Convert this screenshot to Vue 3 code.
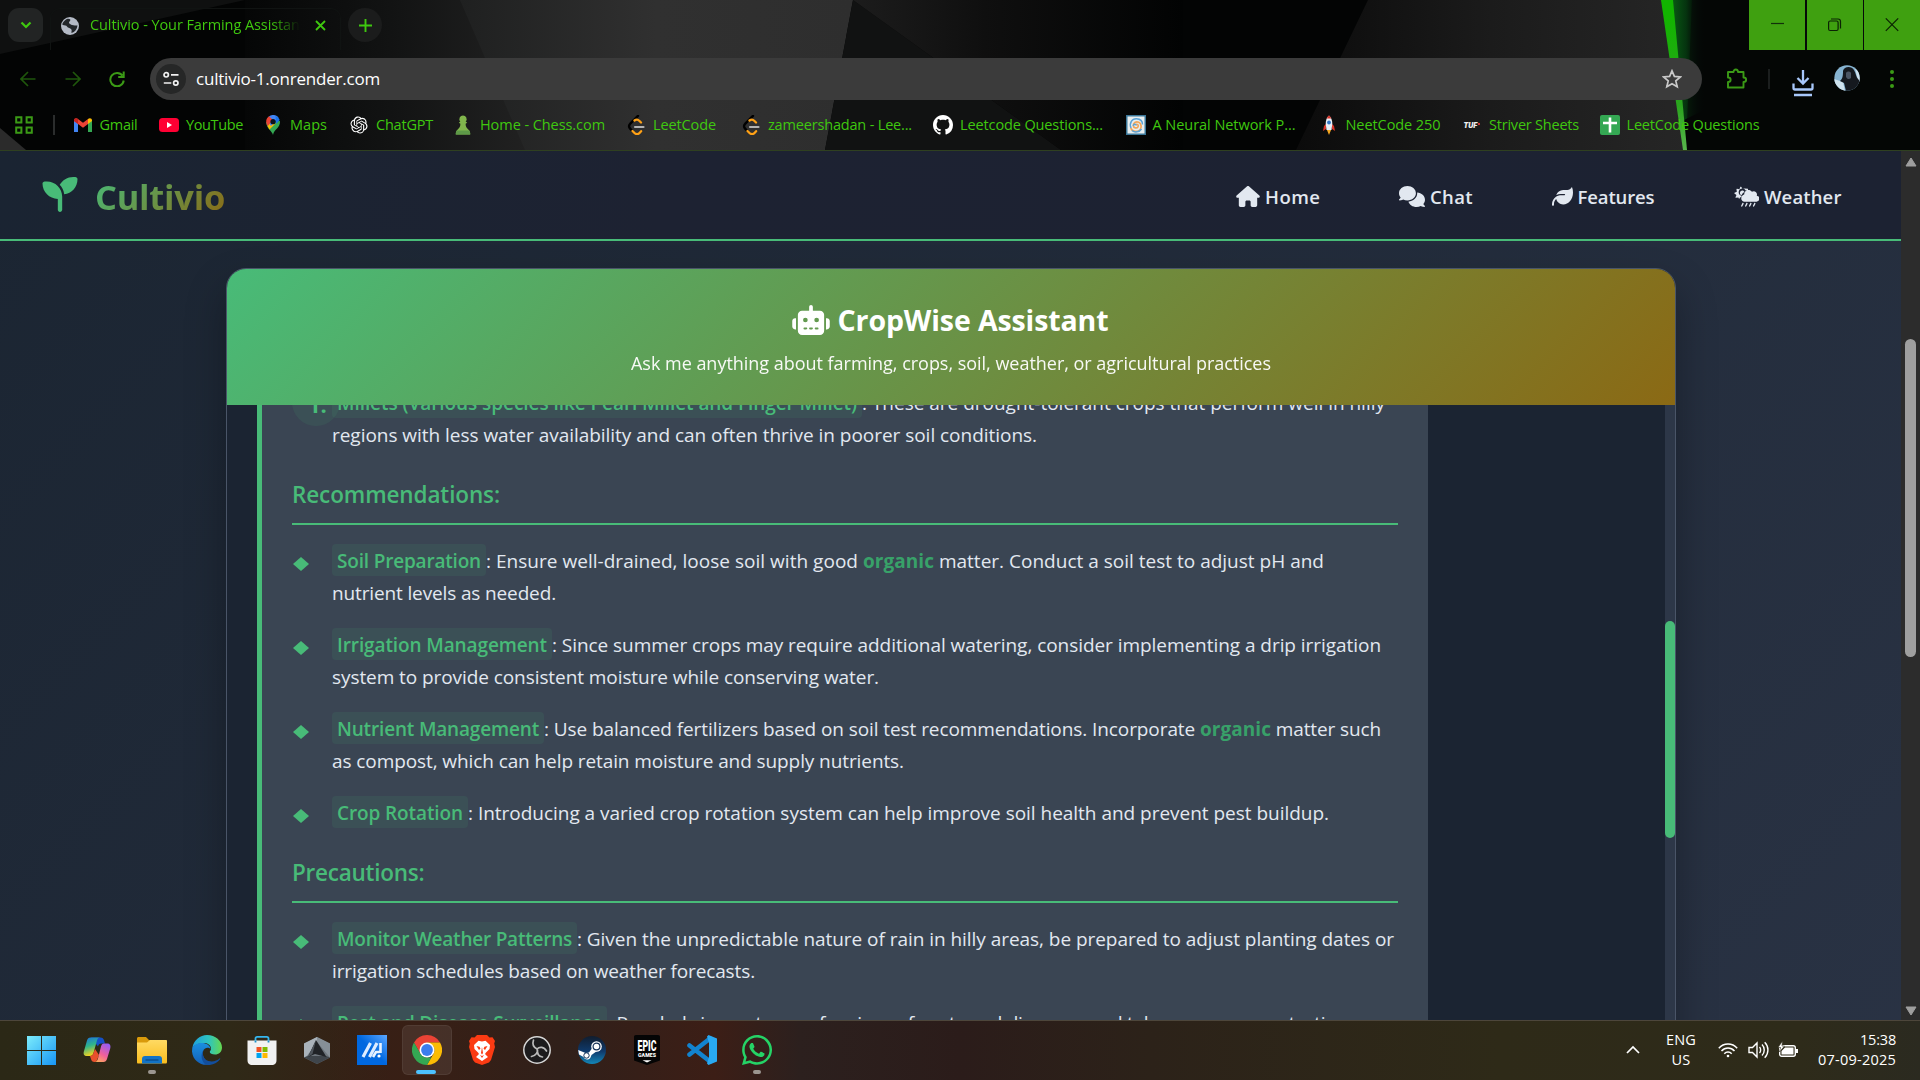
<script setup>
import { nextTick } from 'vue'

// Spreads a text run over its column width through letter spacing.
const vFit = {
  mounted(el, { value }) {
    nextTick(() => {
      el.style.width = 'auto'
      el.style.letterSpacing = '0px'
      const natural = el.getBoundingClientRect().width
      const count = el.textContent.length
      el.style.letterSpacing = `${(value - natural) / count}px`
      el.style.width = `${value}px`
    })
  }
}

const art = {
  gmail: '<path fill="#4285f4" d="M1 5v12h4V8z"/><path fill="#34a853" d="M15 8v9h4V5z"/><path fill="#ea4335" d="M1 5.500C1 3 3.500 2.600 5 4l5 3.800L15 4v5l-5 3.800L5 9v-.1L1 6z"/><path fill="#fbbc04" d="M15 4c1.500-1.400 4-1 4 1.500V6l-4 3z"/><path fill="#c5221f" d="M1 5.500C1 3 3.500 2.600 5 4v5L1 6z"/>',
  youtube: '<rect y="3" width="20" height="14" rx="3.500" fill="#ff0033"/><path fill="#fff" d="M8 7l5 3-5 3z"/>',
  maps: '<path fill="#34a853" d="M10 20c-.8-4-6.800-6.500-6.800-13L17 6c.5 7-6 8-7 14z"/><path fill="#fbbc04" d="M4.500 11l5-5.500 3 3-6 6z"/><path fill="#4285f4" d="M6 1.500C8-.6 13-.8 15.500 2.500L8 11 4 5z"/><path fill="#ea4335" d="M3.200 7C3 4 4.500 2.500 6 1.300L10 5 4.600 11C3.700 9.500 3.200 8 3.200 7z"/><path fill="#1a73e8" d="M12.500 1c2 .7 3.600 2.200 4.200 4L13 9z"/><circle cx="10" cy="6.700" r="2.600" fill="#0a1020"/>',
  gpt: '<g transform="translate(1.500 1.500) scale(.71)"><path fill="#fff" d="M22.2819 9.8211a5.9847 5.9847 0 0 0-.5157-4.9108 6.0462 6.0462 0 0 0-6.5098-2.9A6.0651 6.0651 0 0 0 4.9807 4.1818a5.9847 5.9847 0 0 0-3.9977 2.9 6.0462 6.0462 0 0 0 .7427 7.0966 5.98 5.98 0 0 0 .511 4.9107 6.051 6.051 0 0 0 6.5146 2.9001A5.9847 5.9847 0 0 0 13.2599 24a6.0557 6.0557 0 0 0 5.7718-4.2058 5.9894 5.9894 0 0 0 3.9977-2.9001 6.0557 6.0557 0 0 0-.7475-7.073zm-9.022 12.6081a4.4755 4.4755 0 0 1-2.8764-1.0408l.1419-.0804 4.7783-2.7582a.7948.7948 0 0 0 .3927-.6813v-6.7369l2.02 1.1686a.071.071 0 0 1 .038.052v5.5826a4.504 4.504 0 0 1-4.4945 4.4944zm-9.6607-4.1254a4.4708 4.4708 0 0 1-.5346-3.0137l.142.0852 4.783 2.7582a.7712.7712 0 0 0 .7806 0l5.8428-3.3685v2.3324a.0804.0804 0 0 1-.0332.0615L9.74 19.9502a4.4992 4.4992 0 0 1-6.1408-1.6464zM2.3408 7.8956a4.485 4.485 0 0 1 2.3655-1.9728V11.6a.7664.7664 0 0 0 .3879.6765l5.8144 3.3543-2.0201 1.1685a.0757.0757 0 0 1-.071 0l-4.8303-2.7865A4.504 4.504 0 0 1 2.3408 7.872zm16.5963 3.8558L13.1038 8.364 15.1192 7.2a.0757.0757 0 0 1 .071 0l4.8303 2.7913a4.4944 4.4944 0 0 1-.6765 8.1042v-5.6772a.79.79 0 0 0-.407-.667zm2.0107-3.0231l-.142-.0852-4.7735-2.7818a.7759.7759 0 0 0-.7854 0L9.409 9.2297V6.8974a.0662.0662 0 0 1 .0284-.0615l4.8303-2.7866a4.4992 4.4992 0 0 1 6.6802 4.66zM8.3065 12.863l-2.02-1.1638a.0804.0804 0 0 1-.038-.0567V6.0742a4.4992 4.4992 0 0 1 7.3757-3.4537l-.142.0805L8.704 5.459a.7948.7948 0 0 0-.3927.6813zm1.0976-2.3654l2.602-1.4998 2.6069 1.4998v2.9994l-2.5974 1.4997-2.6067-1.4997Z"/></g>',
  chess: '<path fill="#81b64c" d="M10 .5a3.600 3.600 0 0 1 2.700 6l1.500 1.200-1.600 1c0 2.800 1 4.300 3.200 6.300 1 1 1.500 2.500 1.400 4.500H2.800c-.1-2 .4-3.500 1.400-4.500 2.200-2 3.200-3.500 3.200-6.300l-1.600-1 1.500-1.200a3.600 3.600 0 0 1 2.700-6z"/><path fill="#5d9948" d="M4 15.500h12c.9 1 1.300 2.300 1.200 4H2.800c-.1-1.700.3-3 1.200-4z"/>',
  leetcode: '<path d="M12 .8L4.300 8.700c-1.700 1.700-1.700 3.400 0 5.100l2.200 2.200" fill="none" stroke="#000" stroke-width="2.400" stroke-linecap="round"/><path d="M6.500 16l2 2c1.500 1.400 3.700 1.400 5 0l1.600-1.800M8.500 5.500c2-1.500 3.500-1 5 .5l1.500 1.500" fill="none" stroke="#ffa116" stroke-width="2.300" stroke-linecap="round"/><path d="M9 12h8.500" stroke="#b3b3b3" stroke-width="2.200" stroke-linecap="round"/>',
  github: '<path transform="scale(1.25)" fill="#fff" d="M8 0C3.580 0 0 3.580 0 8c0 3.540 2.290 6.530 5.470 7.590.4.07.55-.17.55-.38 0-.19-.01-.82-.01-1.490-2.010.37-2.530-.49-2.690-.94-.09-.23-.48-.94-.82-1.130-.28-.15-.68-.52-.01-.53.63-.01 1.080.58 1.230.82.72 1.210 1.870.87 2.330.66.07-.52.28-.87.51-1.070-1.780-.2-3.640-.89-3.640-3.950 0-.87.31-1.590.82-2.150-.08-.2-.36-1.020.08-2.120 0 0 .67-.21 2.200.82.64-.18 1.320-.27 2-.27s1.360.09 2 .27c1.530-1.040 2.200-.82 2.200-.82.44 1.100.16 1.920.08 2.120.51.56.82 1.270.82 2.150 0 3.070-1.870 3.750-3.650 3.950.29.25.54.73.54 1.480 0 1.070-.01 1.930-.01 2.200 0 .21.15.46.55.38A8.010 8.010 0 0 0 16 8c0-4.420-3.580-8-8-8z"/>',
  neural: '<rect x=".7" y=".7" width="18.600" height="18.600" fill="#e8eef0" stroke="#3a7698" stroke-width="1.600"/><path d="M10 10c1-1.500 3 0 2 1.800s-4.500 1.400-4.700-1.200 2.600-4.500 5.400-3.300 3.300 5.500 1 7.700-7.500 2-8.900-2" fill="none" stroke="#f2a65a" stroke-width="1.700"/><path d="M10 10.500c0-2-2.500-1.500-2.700.3M5 13c-2-5 1-9.500 5.500-9.300 3.500.2 6 2.300 6 5.800M6 15.500c3 2.500 7.500 1.500 9.500-1.500" fill="none" stroke="#5aa3d8" stroke-width="1.500"/>',
  rocket: '<path fill="#f6a821" d="M8 15h4l-2 5z"/><path fill="#d8352a" d="M5 11l2-2v5l-3 2zM15 11l-2-2v5l3 2z"/><path fill="#e9eef5" d="M10 .5c2.500 2 3.300 5 3.300 8.500L12.500 15h-5L6.700 9C6.700 5.500 7.500 2.500 10 .5z"/><path fill="#d8352a" d="M10 .5c1 .8 1.800 1.800 2.300 3H7.700C8.200 2.300 9 1.300 10 .5z"/><circle cx="10" cy="7.500" r="1.900" fill="#3277c9"/>',
  sheet: '<rect width="20" height="20" rx="2" fill="#34a853"/><path d="M10 2.500v15M3 8h14" stroke="#fff" stroke-width="2.600"/>',
  tuf: '<text x="1.500" y="13" font-family="Inter, Open Sans, sans-serif" font-weight="900" font-style="italic" font-size="7" fill="#eee">TUF</text><rect x="16" y="8" width="2" height="2" fill="#c33"/>'
}

const bookmarks = [
  { icon: 'gmail', text: 'Gmail', w: 38, slot: 86.5 },
  { icon: 'youtube', text: 'YouTube', w: 57, slot: 104 },
  { icon: 'maps', text: 'Maps', w: 37, slot: 86 },
  { icon: 'gpt', text: 'ChatGPT', w: 57, slot: 104 },
  { icon: 'chess', text: 'Home - Chess.com', w: 125, slot: 173 },
  { icon: 'leetcode', text: 'LeetCode', w: 63, slot: 115 },
  { icon: 'leetcode', text: 'zameershadan - Lee...', w: 144, slot: 192 },
  { icon: 'github', text: 'Leetcode Questions...', w: 143, slot: 192.5 },
  { icon: 'neural', text: 'A Neural Network P...', w: 143, slot: 193 },
  { icon: 'rocket', text: 'NeetCode 250', w: 95, slot: 143.5 },
  { icon: 'tuf', text: 'Striver Sheets', w: 90, slot: 137.5 },
  { icon: 'sheet', text: 'LeetCode Questions', w: 133, slot: 170 }
]

const navIcons = {
  home: { box: '0 0 576 512', w: 24, d: 'M575.8 255.5c0 18-15 32.1-32 32.1l-32 0 .7 160.2c0 2.700-.2 5.400-.5 8.100l0 16.200c0 22.100-17.900 40-40 40l-16 0c-1.100 0-2.200 0-3.300-.1c-1.400 .1-2.800 .1-4.200 .1L416 512l-24 0c-22.100 0-40-17.900-40-40l0-24 0-64c0-17.700-14.300-32-32-32l-64 0c-17.700 0-32 14.300-32 32l0 64 0 24c0 22.100-17.900 40-40 40l-24 0-31.900 0c-1.500 0-3-.1-4.500-.2c-1.200 .1-2.400 .2-3.600 .2l-16 0c-22.100 0-40-17.900-40-40l0-112c0-.9 0-1.900 .1-2.800l0-69.700-32 0c-18 0-32-14-32-32.100c0-9 3-17 10-24L266.400 8c7-7 15-8 22-8s15 2 21 7L564.800 231.500c8 7 12 15 11 24z' },
  chat: { box: '0 0 640 512', w: 26, d: 'M208 352c114.900 0 208-78.800 208-176S322.900 0 208 0S0 78.800 0 176c0 38.600 14.700 74.300 39.600 103.400c-3.500 9.400-8.700 17.700-14.200 24.700c-4.800 6.200-9.700 11-13.300 14.300c-1.800 1.600-3.300 2.900-4.300 3.700c-.5 .4-.9 .7-1.100 .8l-.2 .2C1 327.200-1.400 334.400 .8 340.900S9.100 352 16 352c21.800 0 43.800-5.600 62.100-12.500c9.200-3.500 17.800-7.400 25.200-11.400C134.100 343.300 169.800 352 208 352zM448 176c0 112.300-99.100 196.900-216.500 207C255.800 457.400 336.400 512 432 512c38.200 0 73.900-8.700 104.700-23.900c7.500 4 16 7.900 25.200 11.400c18.300 6.900 40.300 12.500 62.100 12.500c6.900 0 13.100-4.500 15.200-11.100c2.100-6.600-.2-13.800-5.800-17.900l-.2-.2c-.2-.2-.6-.4-1.100-.8c-1-.8-2.500-2-4.300-3.700c-3.600-3.300-8.500-8.100-13.300-14.300c-5.500-7-10.700-15.400-14.200-24.700c24.900-29 39.600-64.700 39.600-103.400c0-92.800-84.900-168.900-192.600-175.500c.4 5.100 .6 10.300 .6 15.500z' },
  features: { box: '0 0 512 512', w: 21, d: 'M272 96c-78.600 0-145.100 51.500-167.700 122.500c33.600-17 71.500-26.500 111.700-26.500l88 0c8.800 0 16 7.200 16 16s-7.200 16-16 16l-16 0-72 0c-16.600 0-32.700 1.900-48.300 5.400c-25.900 5.900-49.900 16.400-71.400 30.700C38.300 298.800 0 364.900 0 440l0 16c0 13.300 10.700 24 24 24s24-10.700 24-24l0-16c0-48.700 20.700-92.500 53.800-123.200C121.600 392.300 190.300 448 272 448l1 0c132.100-.7 239-130.900 239-291.400c0-42.600-7.500-83.100-21.100-119.600c-2.600-6.900-12.700-6.600-16.200-.1C455.900 72.100 418.700 96 376 96L272 96z' },
  weather: { box: '20 0 600 512', w: 25, d: 'M282 60l-58 10-36-50c-5-6-14-5-17 1l-24 56-60-9c-7-1-13 5-12 12l9 60-56 25c-7 3-8 12-2 16l49 36-23 57c-3 7 3 14 10 14l60-5 17 33c13-24 34-43 59-52-3-8-4-17-4-26-38-12-65-46-65-86 0-50 40-90 90-90 33 0 62 18 78 45 11-4 23-6 36-6 7 0 14 1 21 2l4-21c2-8-4-14-11-13zM219 110c-33 0-60 27-60 60 0 27 17 49 41 57 13-35 39-64 72-79-9-23-29-38-53-38zM570 236c4-8 6-18 6-28 0-44-36-80-80-80-17 0-32 5-45 14-19-26-50-42-83-42-57 0-104 47-104 104v6c-42 11-72 48-72 94 0 44 36 80 80 80h272c53 0 96-35 96-80 0-35-30-62-70-68zM240 412c-7-4-15-1-19 5l-32 64c-8 20 20 34 30 14l32-64c4-7 1-15-11-19zM336 412c-7-4-15-1-19 5l-32 64c-8 20 20 34 30 14l32-64c4-7 1-15-11-19zM432 412c-7-4-15-1-19 5l-32 64c-8 20 20 34 30 14l32-64c4-7 1-15-11-19zM528 412c-7-4-15-1-19 5l-32 64c-8 20 20 34 30 14l32-64c4-7 1-15-11-19z' }
}

const nav = [
  { icon: 'home', text: 'Home', w: 55.5, slot: 163 },
  { icon: 'chat', text: 'Chat', w: 43, slot: 152.5 },
  { icon: 'features', text: 'Features', w: 77, slot: 182.5 },
  { icon: 'weather', text: 'Weather', w: 77.5, slot: 107 }
]

const recommendations = [
  {
    title: 'Soil Preparation', tw: 144,
    lines: [
      [{ t: ': Ensure well-drained, loose soil with good ', w: 377 }, { t: 'organic', w: 71, k: 1 }, { t: ' matter. Conduct a soil test to adjust pH and', w: 390 }],
      [{ t: 'nutrient levels as needed.', w: 224 }]
    ]
  },
  {
    title: 'Irrigation Management', tw: 210,
    lines: [
      [{ t: ': Since summer crops may require additional watering, consider implementing a drip irrigation', w: 829 }],
      [{ t: 'system to provide consistent moisture while conserving water.', w: 547 }]
    ]
  },
  {
    title: 'Nutrient Management', tw: 202,
    lines: [
      [{ t: ': Use balanced fertilizers based on soil test recommendations. Incorporate ', w: 656 }, { t: 'organic', w: 71, k: 1 }, { t: ' matter such', w: 110 }],
      [{ t: 'as compost, which can help retain moisture and supply nutrients.', w: 572 }]
    ]
  },
  {
    title: 'Crop Rotation', tw: 126,
    lines: [[{ t: ': Introducing a varied crop rotation system can help improve soil health and prevent pest buildup.', w: 861 }]]
  }
]

const precautions = [
  {
    title: 'Monitor Weather Patterns', tw: 235,
    lines: [
      [{ t: ': Given the unpredictable nature of rain in hilly areas, be prepared to adjust planting dates or', w: 817 }],
      [{ t: 'irrigation schedules based on weather forecasts.', w: 423 }]
    ]
  },
  {
    title: 'Pest and Disease Surveillance', tw: 265,
    lines: [
      [{ t: ': Regularly inspect crops for signs of pests and diseases, and take necessary protective', w: 738 }],
      [{ t: 'measures.', w: 84 }]
    ]
  }
]

const sections = [
  { title: 'Recommendations:', w: 208, items: recommendations },
  { title: 'Precautions:', w: 132.5, items: precautions }
]

const apps = [
  { name: 'start', art: '<defs><linearGradient id="wn" x2="1" y2="1"><stop stop-color="#7cecfb"/><stop offset="1" stop-color="#1795f5"/></linearGradient></defs><path fill="url(#wn)" d="M0 1h14v14H0zM15 1h14v14H15zM0 16h14v14H0zM15 16h14v14H15z"/>' },
  { name: 'copilot', art: '<defs><linearGradient id="c1" x2=".3" y2="1"><stop stop-color="#1d70e0"/><stop offset=".5" stop-color="#2fb58a"/><stop offset="1" stop-color="#f2d21f"/></linearGradient><linearGradient id="c2" x1=".7" x2=".2" y2="1"><stop stop-color="#9a5cf0"/><stop offset=".55" stop-color="#f0609a"/><stop offset="1" stop-color="#ffab5c"/></linearGradient></defs><path fill="#1550c8" d="M9 2.500h9.500c2 0 3 1 3.600 3L23 8.500h-3.500c-2 0-3 1-3.500 3z"/><path fill="url(#c1)" d="M8.500 2.500h10c-2 0-3 1.200-3.600 3.200L11.500 18c-.6 2-1.600 3-3.600 3H5c-3 0-4-2-3-5L5 5.500c.6-2 1.700-3 3.500-3z"/><path fill="#e8502c" d="M8 21c2 0 3-1 3.500-3l1.500-4 4 6-2 5c-.5 1.500-1.500 2-2.500 2-2 0-3-1-3.500-3z"/><path fill="url(#c2)" d="M22 8.500h3c3 0 4 2 3.200 5L25 24c-.6 2-1.700 3-3.500 3h-9c2 0 2.800-1.200 3.400-3.200L19 11.500c.5-2 1.400-3 3-3z"/>' },
  { name: 'explorer', run: true, art: '<defs><linearGradient id="fx" x2="0" y2="1"><stop stop-color="#ffda63"/><stop offset="1" stop-color="#f9bd1e"/></linearGradient></defs><path fill="#d99a0b" d="M0 3.500C0 2.500.8 2 1.500 2H9l3 3h8v6H0z"/><path fill="url(#fx)" d="M0 7.500h10L13 5h16c.7 0 1 .5 1 1v21c0 .8-.4 1.500-1.200 1.500H1.200C.4 28.500 0 28 0 27z"/><path fill="#1273c6" d="M5 28.500V24c0-2 1-3 3-3h14c2 0 3 1 3 3v4.500z"/><path d="M8.500 25h13" stroke="#0a4d8f" stroke-width="1.400"/>' },
  { name: 'edge', art: '<defs><linearGradient id="e1" x2="1"><stop stop-color="#1ea0dc"/><stop offset=".55" stop-color="#2ec4c0"/><stop offset="1" stop-color="#65d84f"/></linearGradient><linearGradient id="e2" x2="0" y2="1"><stop stop-color="#1a8fe0"/><stop offset="1" stop-color="#1460b8"/></linearGradient></defs><path fill="url(#e1)" d="M.5 12C2 5 8 0 15 0c8.500 0 15 6 15 12.500 0 4.500-3.300 7-7 7-3 0-5.200-1-5.200-2.500 0-1 1.200-1.500 1.200-3.500C19 10 15.500 8 11.500 8 6 8 2 11 .5 12z"/><path fill="url(#e2)" d="M.3 12.500C2 9.500 6.500 7.500 11 8c4 .5 7.500 3 7.500 6-1.500-2-6.500-2-7.500 2.500-1 5 2.500 11 9 12-8 4-19-1-20-12z"/><path fill="#134e9c" d="M11.500 15c-2 5 .5 9.500 5 11 4.500 1.300 8.500-.3 11-2.500.5-.4 1 .1.700.6C25.500 28 20.500 30.500 15 30 9.500 28 8 20 11.500 15z"/>' },
  { name: 'store', art: '<path d="M8.500 7V3.500c0-1 .6-1.700 1.700-1.700h9.600c1.100 0 1.700.7 1.700 1.700V7" fill="none" stroke="#35b7ef" stroke-width="1.800"/><path fill="#f1f1f1" d="M.5 5.500h29V25c0 3.500-1.500 5-5 5h-19c-3.500 0-5-1.500-5-5z"/><path d="M8.500 7.500v-2M21.500 7.500v-2" stroke="#1b8fc8" stroke-width="1.800"/><path fill="#f25022" d="M9.500 12h5v5h-5z"/><path fill="#7fba00" d="M15.500 12h5v5h-5z"/><path fill="#00a4ef" d="M9.500 18h5v5h-5z"/><path fill="#ffb900" d="M15.500 18h5v5h-5z"/>' },
  { name: 'armoury', art: '<path fill="#6d757c" d="M15 2l13 6.500v14L15 29 2 22.500v-14z"/><path fill="#a9b2ba" d="M15 2v5L5 21l-3 1.500v-14z"/><path fill="#868f97" d="M15 2l13 6.500v14L15 7z"/><path fill="#3f454b" d="M15 29l13-6.500-4-1.500H6l-4 1.500z"/><path fill="#202327" d="M14 5l10.500 17L13 19l-7 3z"/><path fill="#4d545b" d="M14 5l-3.500 14L6 22z"/>' },
  { name: 'myasus', art: '<defs><linearGradient id="ma" x1="0" y1="1" x2="1" y2="0"><stop offset=".5" stop-color="#0068e0"/><stop offset="1" stop-color="#5aa6ff"/></linearGradient></defs><path fill="url(#ma)" d="M0 0h30v30H0z"/><path d="M6 22l7.500-14M12.500 22L20 8" stroke="#dcecff" stroke-width="3.200"/><path d="M16 22l3-5h3.500M23.500 8v10" stroke="#e8f3ff" stroke-width="2.600" fill="none"/><circle cx="22" cy="21" r="1.600" fill="#fff"/>' },
  { name: 'chrome', active: true, art: '<path fill="#ea4335" d="M15 0a15 15 0 0 1 13 7.500H15L8.500 19 2 7.500A15 15 0 0 1 15 0z"/><path fill="#fbbc04" d="M28 7.500A15 15 0 0 1 15 30l6.500-11.200c1.200-2 1.500-5-.5-7.800l-6-3.500z"/><path fill="#34a853" d="M2 7.500l6.500 11.300c1.300 2.200 4 4 6.500 3.700h4.300L15 30A15 15 0 0 1 2 7.500z"/><circle cx="15" cy="15" r="7.500" fill="#fff"/><circle cx="15" cy="15" r="5.900" fill="#3b7ded"/>' },
  { name: 'brave', art: '<path fill="#fb3b13" d="M10 0h10l2.500 2.500 3-.3L28 6l-.8 2.500L28 12l-4 13-2 2.500L15 30l-7-2.500L6 25 2 12l.8-3.500L2 6l2.500-3.800 3 .3z"/><path fill="#fff" d="M15 6.500l3.500-.8L23 10l-.5 4-3.500 3.500-1 1.500 3 3-6 4-6-4 3-3-1-1.500L7.500 14 7 10l4.500-4.300z"/><path fill="#fb3b13" d="M9.500 11l3 .8 1 1.700L12 15zM20.500 11l-3 .8-1 1.700L18 15zM15 12l1 6-1 1.500-1-1.500zM13 20l2 1 2-1-2 3z"/>' },
  { name: 'obs', art: '<circle cx="15" cy="15" r="13.200" fill="#1c1b1d" stroke="#d6d6d6" stroke-width="1.500"/><path d="M11.500 5c-1.500 4.500.5 7.500 3.500 9 1.500 3-1 6.500-5.500 7.500M15 14c2.500-2.500 7-2.500 9.500 2M15.500 15c-.5 4 1.500 6.500 5 7" fill="none" stroke="#b9b9b9" stroke-width="1.700" stroke-linecap="round"/>' },
  { name: 'steam', art: '<defs><linearGradient id="st" x2="0" y2="1"><stop stop-color="#111d2e"/><stop offset=".55" stop-color="#0f3a6c"/><stop offset="1" stop-color="#1387b8"/></linearGradient></defs><circle cx="15" cy="15" r="14" fill="url(#st)"/><path fill="#fff" d="M1.200 15l7.300 3 3.500-.5 4-5.500 4 4-5.500 4-1 2.500c-1.500 3-6 2.500-7-.5L2 19.500z"/><circle cx="19.500" cy="11.500" r="5.300" fill="#fff"/><circle cx="19.500" cy="11.500" r="3.400" fill="#fff" stroke="#173358" stroke-width="1.200"/><circle cx="9.500" cy="20.500" r="2.700" fill="none" stroke="#173358" stroke-width="1"/>' },
  { name: 'epic', art: '<path fill="#050505" d="M4 0h22c1.500 0 2 .7 2 2v23.500L15 30 2 25.500V2c0-1.300.5-2 2-2z"/><text x="15" y="15.500" text-anchor="middle" font-family="Roboto, Open Sans, sans-serif" font-weight="900" font-size="15" textLength="19" lengthAdjust="spacingAndGlyphs" fill="#fff">EPIC</text><text x="15" y="22" text-anchor="middle" font-family="Roboto, Open Sans, sans-serif" font-weight="900" font-size="5.200" textLength="18" fill="#fff">GAMES</text><path fill="#fff" d="M10.500 25.200h9L15 27.500z"/>' },
  { name: 'vscode', art: '<path d="M2.500 10.500L23 26.500M2.500 19.500L23 3.500" stroke="#1283cf" stroke-width="4.600" stroke-linecap="round"/><path fill="#29a9f2" d="M21.500 0L30 3.500v23L21.500 30 20 28.500 22 22V8l-2-6.500z"/>' },
  { name: 'whatsapp', run: true, art: '<path transform="translate(0 -2.140) scale(.067)" fill="#25d366" d="M380.900 97.100C339 55.100 283.200 32 223.900 32c-122.400 0-222 99.600-222 222 0 39.100 10.200 77.300 29.600 111L0 480l117.700-30.900c32.400 17.700 68.900 27 106.100 27h.1c122.300 0 224.100-99.600 224.100-222 0-59.300-25.200-115-67.100-157zm-157 341.600c-33.200 0-65.700-8.900-94-25.700l-6.700-4-69.800 18.300L72 359.200l-4.400-7c-18.500-29.400-28.200-63.300-28.200-98.200 0-101.700 82.800-184.500 184.600-184.500 49.300 0 95.600 19.200 130.400 54.100 34.800 34.900 56.200 81.200 56.100 130.500 0 101.800-84.900 184.600-186.600 184.600zm101.200-138.200c-5.500-2.800-32.800-16.200-37.900-18-5.100-1.900-8.800-2.800-12.500 2.800-3.700 5.600-14.300 18-17.600 21.800-3.200 3.700-6.500 4.200-12 1.400-32.600-16.300-54-29.100-75.500-66-5.700-9.800 5.700-9.100 16.300-30.300 1.800-3.700.9-6.900-.5-9.700-1.400-2.800-12.500-30.100-17.100-41.200-4.500-10.800-9.100-9.300-12.500-9.500-3.200-.2-6.900-.2-10.600-.2-3.700 0-9.700 1.400-14.800 6.900-5.100 5.600-19.400 19-19.400 46.300 0 27.300 19.900 53.700 22.600 57.400 2.800 3.700 39.100 59.700 94.800 83.800 35.200 15.200 49 16.500 66.600 13.900 10.700-1.600 32.800-13.400 37.400-26.400 4.600-13 4.600-24.100 3.200-26.400-1.300-2.500-5-3.900-10.500-6.600z"/>' }
]
</script>

<template>
  <div class="screen">
    <div class="browser">
      <svg class="wallpaper" viewBox="0 0 1920 150" preserveAspectRatio="none">
        <defs>
          <linearGradient id="wg1"><stop stop-color="#050606" /><stop offset=".5" stop-color="#121313" /><stop offset="1" stop-color="#222" /></linearGradient>
          <linearGradient id="wg2"><stop stop-color="#1f2020" /><stop offset=".5" stop-color="#303030" /><stop offset="1" stop-color="#2e2e2e" /></linearGradient>
          <linearGradient id="wg3"><stop stop-color="#1c1c1c" /><stop offset=".4" stop-color="#0f0f0f" /><stop offset="1" stop-color="#020303" /></linearGradient>
          <linearGradient id="wg4"><stop stop-color="#0b0b0b" /><stop offset=".5" stop-color="#1b1b1b" /><stop offset="1" stop-color="#262626" /></linearGradient>
          <linearGradient id="wg5"><stop stop-color="#0a6a14" /><stop offset=".5" stop-color="#064012" stop-opacity=".8" /><stop offset="1" stop-color="#070a09" stop-opacity="0" /></linearGradient>
          <linearGradient id="wg6" x2="0" y2="1"><stop offset=".1" stop-color="#12b400" /><stop offset=".7" stop-color="#2aa51e" /><stop offset="1" stop-color="#58b54c" /></linearGradient>
        </defs>
        <rect width="1920" height="150" fill="#030404" />
        <path d="M0 0h245L0 54z" fill="#0f1010" />
        <path d="M0 128l26 22H0z" fill="#2b2b2b" />
        <path d="M245 0h240l50 150H245z" fill="url(#wg1)" />
        <path d="M460 0h393l-28 150H525z" fill="url(#wg2)" />
        <path d="M853 0l208 150H825z" fill="#111212" />
        <path d="M853 0h330v150h-122z" fill="url(#wg3)" />
        <path d="M1368 0h296l22 150h-390z" fill="url(#wg4)" />
        <path d="M1668 0h36v110l-20 10z" fill="url(#wg5)" />
        <path d="M1692 0h228v150h-234z" fill="#060908" opacity=".55" />
        <path d="M1661 0h12l14 150h-4z" fill="url(#wg6)" />
      </svg>

      <div class="tabs">
        <button class="tab-search">
          <svg width="12" height="8" viewBox="0 0 12 8"><path d="M1.500 1.500L6 6l4.500-4.500" fill="none" stroke="#3fc80f" stroke-width="2.200" /></svg>
        </button>
        <div class="tab">
          <svg class="globe" width="18" height="18" viewBox="0 0 18 18"><circle cx="9" cy="9" r="9" fill="#b4bac6" /><path d="M7 1.800c2.500 0 3 1.200 1.500 2.700S9 7.200 11 8s4 .2 5.500.5c-.3 3.500-2.500 6.500-6 7.500-.5-1.500 1-2.500-.5-4S6.500 11 6 9.500 3.500 8.500 1.800 8 4 2 7 1.800z" fill="#23272b" /></svg>
          <div class="tab-title"><span v-fit="215" class="fit">Cultivio - Your Farming Assistant</span></div>
          <svg width="11" height="11" viewBox="0 0 11 11"><path d="M1 1l9 9M10 1l-9 9" stroke="#3fc80f" stroke-width="1.800" /></svg>
        </div>
        <button class="new-tab">
          <svg width="13" height="13" viewBox="0 0 13 13"><path d="M6.500 0v13M0 6.500h13" stroke="#3fc80f" stroke-width="1.900" /></svg>
        </button>
        <div class="window-buttons">
          <span><svg width="14" height="14" viewBox="0 0 14 14"><path d="M1 5.500h13" stroke="#12300a" stroke-width="1.200" /></svg></span>
          <span><svg width="14" height="14" viewBox="0 0 14 14" fill="none" stroke="#0b2204" stroke-width="1.200"><rect x=".6" y="3" width="9.500" height="9.500" rx="1.500" /><path d="M3 1h7c1.500 0 2.500 1 2.500 2.500v7" /></svg></span>
          <span><svg width="14" height="14" viewBox="0 0 14 14"><path d="M.8 .4l12.400 12.400M13.200 .4L.8 12.800" stroke="#0b2204" stroke-width="1.200" /></svg></span>
        </div>
      </div>

      <div class="toolbar">
        <div class="history">
          <svg width="16" height="16" viewBox="0 0 16 16"><path d="M15.500 8H1.500M8 1L1 8l7 7" fill="none" stroke="#1f560c" stroke-width="1.700" /></svg>
          <svg width="16" height="16" viewBox="0 0 16 16"><path d="M.5 8h14M8 1l7 7-7 7" fill="none" stroke="#1f560c" stroke-width="1.700" /></svg>
          <svg width="16" height="16" viewBox="0 0 16 16"><path d="M13.500 4.700A6.700 6.700 0 1 0 14.700 9.500M14.700.5V6H9.200" fill="none" stroke="#3b9a16" stroke-width="2" /></svg>
        </div>
        <div class="address">
          <span class="site-info">
            <svg width="16" height="16" viewBox="0 0 16 16" fill="none" stroke="#f0f0f0" stroke-width="1.700"><circle cx="3.200" cy="3.800" r="2.200" /><path d="M8 3.800h7.500M.8 12h7.500" /><circle cx="12.800" cy="12" r="2.200" /></svg>
          </span>
          <span v-fit="184" class="fit url">cultivio-1.onrender.com</span>
          <svg class="star" width="20" height="20" viewBox="0 0 20 20"><path d="M10 1.800l2.400 5.600 6 .5-4.600 4 1.400 5.900L10 14.700l-5.200 3.100 1.400-5.900-4.600-4 6-.5z" fill="none" stroke="#c9c9c9" stroke-width="1.700" /></svg>
        </div>
        <div class="actions">
          <svg class="puzzle" width="22" height="22" viewBox="0 0 22 22"><path d="M2 4h5.500C7.500.6 12 .6 12 4h5.500v5.500c3.500 0 3.500 4.500 0 4.500v5.500H2V14c3.500 0 3.500-4.500 0-4.500z" fill="none" stroke="#3b9a16" stroke-width="1.900" stroke-linejoin="round" /></svg>
          <i class="divider"></i>
          <svg class="download" width="22" height="28" viewBox="0 0 22 28" fill="none" stroke="#a8c7fa" stroke-width="2.300"><path d="M11 1v13M5.500 9l5.500 5.500L16.500 9M1.500 14.500V19c0 1 .5 1.500 1.500 1.500h16c1 0 1.500-.5 1.500-1.500v-4.500M2 26h18" /></svg>
          <svg class="avatar" width="26" height="26" viewBox="0 0 26 26"><defs><clipPath id="av"><circle cx="13" cy="13" r="12.700" /></clipPath></defs><g clip-path="url(#av)"><path fill="#86b3d1" d="M0 0h26v26H0z" /><path fill="#cfe2ee" d="M0 14l9 3 2 9H0zM21 3l5 4v10l-2-1z" /><path fill="#15191f" d="M9 6c1-5 9-5 11-1 2 3 2 7 4 9s3 4 3 12H12l-2-8-4-2c3-2 3-7 3-10z" /><path fill="#4b5563" d="M12 8c1-2 4-2 5 0v5c-2 2-4 1-5-1z" /></g></svg>
          <svg width="6" height="20" viewBox="0 0 6 20" fill="#3b9a16"><circle cx="3" cy="3" r="2" /><circle cx="3" cy="10" r="2" /><circle cx="3" cy="17" r="2" /></svg>
        </div>
      </div>

      <div class="bookmarks">
        <svg class="grid-icon" width="18" height="18" viewBox="0 0 18 18" fill="none" stroke="#3b9a16" stroke-width="2"><path d="M1.200 1.200h5.200v5.200H1.200zM11.600 1.200h5.200v5.200h-5.200zM1.200 11.600h5.200v5.200H1.200zM11.600 11.600h5.200v5.200h-5.200z" /></svg>
        <i class="divider"></i>
        <div v-for="(b, i) in bookmarks" :key="i" class="bookmark" :style="{ width: b.slot + 'px' }">
          <svg width="20" height="20" viewBox="0 0 20 20" v-html="art[b.icon]"></svg>
          <span v-fit="b.w" class="fit">{{ b.text }}</span>
        </div>
      </div>
    </div>

    <div class="viewport">
      <div class="page">
        <header class="site-header">
          <svg class="seedling" width="40" height="40" viewBox="0 0 512 512"><path d="M512 32c0 113.600-84.600 207.500-194.200 222c-7.100-53.400-30.600-101.600-65.300-139.300C290.800 46.300 364 0 448 0l32 0c17.700 0 32 14.300 32 32zM0 96C0 78.300 14.300 64 32 64l32 0c123.700 0 224 100.300 224 224l0 32 0 160c0 17.700-14.300 32-32 32s-32-14.300-32-32l0-160C100.300 320 0 219.700 0 96z" /></svg>
          <span v-fit="130" class="fit brand">Cultivio</span>
          <nav>
            <a v-for="n in nav" :key="n.text" :style="{ width: n.slot + 'px' }">
              <svg :width="navIcons[n.icon].w" height="21" :viewBox="navIcons[n.icon].box"><path :d="navIcons[n.icon].d" /></svg>
              <span v-fit="n.w" class="fit">{{ n.text }}</span>
            </a>
          </nav>
        </header>

        <main class="card">
          <div class="card-header">
            <h1>
              <svg width="38" height="30" viewBox="0 0 640 512"><path d="M320 0c17.700 0 32 14.300 32 32l0 64 120 0c39.800 0 72 32.200 72 72l0 272c0 39.800-32.200 72-72 72l-304 0c-39.800 0-72-32.200-72-72l0-272c0-39.800 32.200-72 72-72l120 0 0-64c0-17.700 14.300-32 32-32zM208 384c-8.800 0-16 7.200-16 16s7.200 16 16 16l32 0c8.800 0 16-7.200 16-16s-7.200-16-16-16l-32 0zm96 0c-8.800 0-16 7.200-16 16s7.200 16 16 16l32 0c8.800 0 16-7.200 16-16s-7.200-16-16-16l-32 0zm96 0c-8.800 0-16 7.200-16 16s7.200 16 16 16l32 0c8.800 0 16-7.200 16-16s-7.200-16-16-16l-32 0zM264 256a40 40 0 1 0 -80 0 40 40 0 1 0 80 0zm152 40a40 40 0 1 0 0-80 40 40 0 1 0 0 80zM48 224l16 0 0 192-16 0c-26.500 0-48-21.500-48-48l0-96c0-26.500 21.500-48 48-48zm544 0c26.500 0 48 21.500 48 48l0 96c0 26.500-21.500 48-48 48l-16 0 0-192 16 0z" /></svg>
              <span v-fit="271" class="fit">CropWise Assistant</span>
            </h1>
            <p><span v-fit="640" class="fit">Ask me anything about farming, crops, soil, weather, or agricultural practices</span></p>
          </div>
          <div class="messages">
            <div class="bubble">
              <div class="content">
                <div class="entry numbered">
                  <span class="number">1.</span>
                  <div class="line">
                    <strong class="chip"><span v-fit="520" class="fit">Millets (Various species like Pearl Millet and Finger Millet)</span></strong><span v-fit="523" class="fit">: These are drought-tolerant crops that perform well in hilly</span>
                  </div>
                  <div class="line"><span v-fit="705" class="fit">regions with less water availability and can often thrive in poorer soil conditions.</span></div>
                </div>
                <section v-for="s in sections" :key="s.title">
                  <h3><span v-fit="s.w" class="fit">{{ s.title }}</span></h3>
                  <div v-for="item in s.items" :key="item.title" class="entry">
                    <svg class="bullet" width="16" height="14" viewBox="0 0 16 14"><path d="M8 0l8 7-8 7-8-7z" fill="#48bb78" /></svg>
                    <div v-for="(line, li) in item.lines" :key="li" class="line">
                      <strong v-if="li === 0" class="chip"><span v-fit="item.tw" class="fit">{{ item.title }}</span></strong><span v-for="(r, ri) in line" :key="ri" v-fit="r.w" class="fit" :class="{ keyword: r.k }">{{ r.t }}</span>
                    </div>
                  </div>
                </section>
              </div>
            </div>
            <div class="inner-scroll"><i></i></div>
          </div>
        </main>
      </div>
      <div class="page-scroll">
        <svg width="12" height="10" viewBox="0 0 12 10"><path d="M6 1l5 8H1z" fill="#9f9f9f" stroke="#9f9f9f" stroke-linejoin="round" /></svg>
        <i></i>
        <svg class="down" width="12" height="10" viewBox="0 0 12 10"><path d="M6 9l5-8H1z" fill="#9f9f9f" stroke="#9f9f9f" stroke-linejoin="round" /></svg>
      </div>
    </div>

    <footer class="taskbar">
      <div class="apps">
        <div v-for="a in apps" :key="a.name" class="app" :class="{ active: a.active, run: a.run }">
          <svg width="30" height="30" viewBox="0 0 30 30" v-html="a.art"></svg>
        </div>
      </div>
      <div class="tray">
        <svg class="caret" width="14" height="9" viewBox="0 0 14 9"><path d="M1 8l6-6 6 6" fill="none" stroke="#fff" stroke-width="1.700" /></svg>
        <div class="lang"><span v-fit="30" class="fit">ENG</span><span v-fit="19" class="fit">US</span></div>
        <svg class="wifi" width="20" height="16" viewBox="0 0 20 16" fill="none" stroke="#fff" stroke-width="1.500"><path d="M.8 6.200c5-5.500 13.400-5.500 18.400 0M3.500 9c3.600-4 9.400-4 13 0M6.300 11.800c2-2.300 5.400-2.300 7.400 0" /><circle cx="10" cy="14" r="1.300" fill="#fff" stroke="none" /></svg>
        <svg class="sound" width="21" height="18" viewBox="0 0 21 18" fill="none" stroke="#fff" stroke-width="1.400"><path d="M1 6.500h3.500L9 2v14l-4.500-4.500H1zM11.500 6c1.500 1.500 1.500 4.500 0 6M14 3.500c3 3 3 8 0 11M16.700 1.300c4.300 4.300 4.300 11.100 0 15.400" /></svg>
        <svg class="battery" width="21" height="17" viewBox="0 0 21 17"><rect x="1.700" y="4.700" width="15.600" height="10.600" rx="2" fill="none" stroke="#fff" stroke-width="1.400" /><path d="M7 6.500h8.500v7h-12V10z" fill="#fff" /><path d="M18 8h2v4h-2z" fill="#fff" /><path d="M4.500 0L0 6.500h2.500L1.500 11 6.500 5H4z" fill="#fff" stroke="#2c2918" stroke-width=".6" /></svg>
        <div class="clock"><span v-fit="36" class="fit">15:38</span><span v-fit="78" class="fit">07-09-2025</span></div>
      </div>
    </footer>
  </div>
</template>

<style>
html, body { margin: 0; background: #000; overflow: hidden; }
</style>

<style scoped>
* { box-sizing: border-box; }
svg { display: block; flex: none; }
.screen { width: 1920px; height: 1080px; overflow: hidden; display: flex; flex-direction: column; font-family: "Open Sans", "Noto Sans", sans-serif; }
.fit { display: inline-block; white-space: pre; }
button { border: 0; padding: 0; display: flex; align-items: center; justify-content: center; }

.browser { position: relative; height: 151px; border-bottom: 1px solid #2f4020; display: flex; flex-direction: column; }
.wallpaper { position: absolute; inset: 0; width: 1920px; height: 150px; }
.tabs { position: relative; height: 50px; display: flex; align-items: center; padding-left: 8px; }
.tab-search { width: 35px; height: 34px; border-radius: 11px; background: #222424; }
.tab { width: 291px; height: 42px; margin: 8px 0 0 7px; padding: 0 14px 8px 10px; border: 1px solid #101312; border-bottom: 0; border-radius: 10px 10px 0 0; display: flex; align-items: center; }
.tab-title { width: 210px; height: 24px; margin: 0 15px 0 11px; overflow: hidden; color: #3fc80f; font-size: 14.500px; line-height: 22px; -webkit-mask-image: linear-gradient(90deg, #000 86%, transparent); mask-image: linear-gradient(90deg, #000 86%, transparent); }
.new-tab { width: 34px; height: 34px; border-radius: 50%; background: #1b1c1c; margin-left: 7px; }
.window-buttons { margin-left: auto; display: flex; gap: 1.500px; background: #060908; }
.window-buttons span { width: 56px; height: 50px; background: #3fa010; display: flex; align-items: center; justify-content: center; }

.toolbar { position: relative; height: 58px; display: flex; align-items: center; }
.history { width: 150px; padding-left: 20px; display: flex; gap: 28.500px; }
.address { width: 1552px; height: 42px; border-radius: 21px; background: #3b3b3b; display: flex; align-items: center; padding: 0 20px 0 6px; }
.site-info { width: 30px; height: 30px; border-radius: 50%; background: #262727; display: flex; align-items: center; justify-content: center; margin-right: 10px; }
.url { color: #fff; font-size: 17px; line-height: 24px; }
.star { margin-left: auto; }
.actions { flex: 1; display: flex; align-items: center; padding-left: 24px; }
.divider { display: block; width: 2px; height: 20px; background: #26292a; }
.actions .divider { margin: 0 22px 0 20px; background: #1b1e1e; }
.avatar { margin: -2px 29px 0 20px; }
.download { margin-top: 7px; }

.bookmarks { position: relative; height: 34px; display: flex; align-items: center; padding-left: 15px; color: #3fc80f; font-size: 14.500px; line-height: 20px; }
.bookmarks .divider { margin: 0 18px 0 19.500px; background: #2b2d2d; }
.bookmark { display: flex; align-items: center; gap: 7px; flex: none; }
.bookmark .fit { margin-top: -1px; }

.viewport { height: 869px; display: flex; overflow: hidden; }
.page { width: 1901px; background: linear-gradient(135deg, #1b2532 0%, #2b3446 115%); }
.site-header { height: 90px; border-bottom: 2px solid #48bb78; background: linear-gradient(100deg, #1a2432 0%, #1d2232 35%, #1c2232 100%); display: flex; align-items: center; padding: 0 0 0 40px; }
.seedling { fill: #48bb78; height: 35px; width: 40px; margin-top: -2px; }
.brand { margin: 3px 0 0 15px; font-size: 34.500px; font-weight: 700; line-height: 44px; background: linear-gradient(135deg, #48bb78, #8b6914); -webkit-background-clip: text; background-clip: text; color: transparent; }
.site-header nav { margin-left: auto; width: 665px; display: flex; align-items: center; }
nav a { display: flex; align-items: center; gap: 5px; color: #e2e8f0; font-size: 18.500px; font-weight: 600; line-height: 26px; padding-top: 2px; }
nav a .fit { margin-top: 1px; }
nav svg { fill: #e2e8f0; }

.card { width: 1450px; height: 800px; margin: 27px 0 0 226px; border: 1px solid #4a5568; border-radius: 20px; overflow: hidden; background: #1b2432; box-shadow: 0 20px 40px rgba(0, 0, 0, .3); }
.card-header { height: 136px; padding-top: 33px; background: linear-gradient(135deg, #48bb78, #8b6914); color: #fff; }
h1 { margin: 0 2px 0 0; height: 38px; display: flex; justify-content: center; align-items: center; gap: 8px; font-size: 28.500px; font-weight: 700; line-height: 38px; }
h1 svg { fill: #fff; margin-top: -2px; }
h1 .fit { margin-top: -3px; }
.card-header p { margin: 10px 0 0; text-align: center; font-size: 18px; line-height: 26px; opacity: .95; }
.messages { height: 640px; display: flex; padding-left: 30px; overflow: hidden; }
.bubble { width: 1171px; border-left: 5px solid #48bb78; background: #3a4553; overflow: hidden; }
.content { width: 1106px; margin: -19px 0 0 30px; color: #e2e8f0; font-size: 19px; line-height: 34px; }
.entry { position: relative; padding-left: 40px; margin-bottom: 20px; }
.line { height: 32px; white-space: nowrap; display: flex; }
.chip { display: block; height: 32px; padding: 0 5px; border-radius: 4px; background: rgba(72, 187, 120, .1); color: #48bb78; font-weight: 600; }
.keyword { color: #38a169; font-weight: 700; }
.bullet { position: absolute; left: 1px; top: 13px; }
.number { position: absolute; left: 0; top: -8px; width: 48px; height: 48px; border-radius: 50%; background: rgba(72, 187, 120, .1); color: #48bb78; font-size: 22px; font-weight: 700; line-height: 52px; padding-left: 16px; }
h3 { margin: 0 0 19px; height: 55px; padding-top: 6px; border-bottom: 2px solid #48bb78; color: #48bb78; font-size: 22.500px; font-weight: 600; line-height: 38px; }
.inner-scroll { width: 10px; margin-left: auto; background: #2d3748; padding-top: 216px; }
.inner-scroll i { display: block; width: 10px; height: 217px; border-radius: 5px; background: #48bb78; }

.page-scroll { width: 19px; background: #2c2c2c; display: flex; flex-direction: column; align-items: center; padding: 6px 0 4px; }
.page-scroll i { width: 11px; height: 318px; margin-top: 172px; border-radius: 6px; background: #9f9f9f; }
.page-scroll .down { margin-top: auto; }

.taskbar { height: 60px; border-top: 1px solid #4d463b; background: linear-gradient(90deg, #2b2816 0, #2f2917 230px, #33201600 390px), linear-gradient(90deg, #361f16 300px, #381f15 420px, #30201a 560px, #3c1e16 715px, #2c201e 800px, #2b1c1a 960px, #2c2219 1150px, #2e2a18 1500px, #2e2b1a 1800px, #2b2a20 1920px); display: flex; align-items: center; }
.apps { display: flex; padding-left: 14px; }
.app { position: relative; width: 55px; height: 59px; display: flex; align-items: center; justify-content: center; }
.app.active::before { content: ""; position: absolute; inset: 4px 2px 5px 3px; border-radius: 6px; background: rgba(255, 255, 255, .08); border: 1px solid rgba(255, 255, 255, .06); }
.app svg { position: relative; margin-top: -2px; }
.app.run::after, .app.active::after { content: ""; position: absolute; left: 24px; bottom: 6px; width: 8px; height: 4px; border-radius: 2px; background: #9b9690; }
.app.active::after { left: 17px; width: 20px; background: #4cc2ff; }
.tray { margin-left: auto; display: flex; align-items: center; color: #fff; font-size: 14.500px; line-height: 20px; padding: 0 24px 2px 0; }
.lang, .clock { display: flex; flex-direction: column; align-items: center; }
.lang { margin: 0 22px 0 26px; }
.sound { margin: 0 9px 0 10px; }
.battery { margin-right: 19px; }
.clock { align-items: flex-end; }
</style>
